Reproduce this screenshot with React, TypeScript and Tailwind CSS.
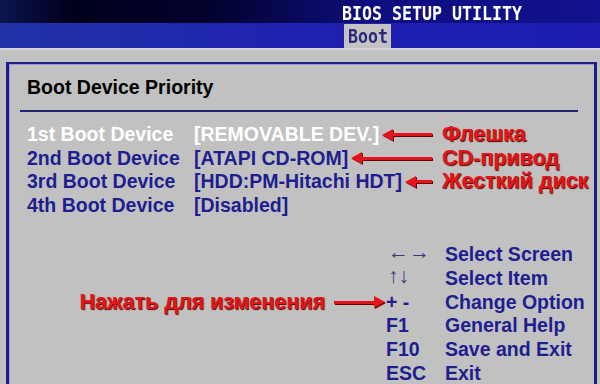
const mono = 'font-["DejaVu_Sans_Mono",monospace]';
const sans = 'font-["Liberation_Sans",Arial,sans-serif]';

function RedArrow({ dir, className }: { dir: 'left' | 'right'; className?: string }) {
  const head = (
    <svg width="11" height="12" viewBox="0 0 11 12" className="shrink-0">
      {dir === 'left' ? (
        <polygon points="0,6 11,0 11,12" fill="#e3141c" />
      ) : (
        <polygon points="11,6 0,0 0,12" fill="#e3141c" />
      )}
    </svg>
  );
  return (
    <div className={`flex items-center [filter:drop-shadow(1px_1px_0_#6a0000)] ${className ?? ''}`}>
      {dir === 'left' && head}
      <div className="h-[3px] flex-1 bg-[#e3141c]" />
      {dir === 'right' && head}
    </div>
  );
}

function Note({ children }: { children: string }) {
  return (
    <span className={`${sans} whitespace-nowrap text-[21.5px] font-bold text-[#e3141c] [text-shadow:1px_1px_1px_#5a0000]`}>
      {children}
    </span>
  );
}

const devices = [
  { label: '1st Boot Device', value: '[REMOVABLE DEV.]', note: 'Флешка', active: true },
  { label: '2nd Boot Device', value: '[ATAPI CD-ROM]', note: 'CD-привод' },
  { label: '3rd Boot Device', value: '[HDD:PM-Hitachi HDT]', note: 'Жесткий диск' },
  { label: '4th Boot Device', value: '[Disabled]' },
];

const keys = [
  { key: '←→', desc: 'Select Screen', thin: true },
  { key: '↑↓', desc: 'Select Item', thin: true },
  { key: '+ -', desc: 'Change Option', note: 'Нажать для изменения' },
  { key: 'F1', desc: 'General Help' },
  { key: 'F10', desc: 'Save and Exit' },
  { key: 'ESC', desc: 'Exit' },
];

export default function App() {
  return (
    <div className="flex h-[384px] w-[600px] flex-col overflow-hidden bg-[#c1c1c1]">
      {/* title bar */}
      <div className="h-[23px] bg-[linear-gradient(90deg,#0c1450_0%,#00001c_12%,#02022e_35%,#0e0e80_62%,#12128e_100%)] pl-[342px] pt-[2px]">
        <span className={`${mono} inline-block origin-left scale-x-[0.874] text-[19px] font-bold leading-[21px] text-white`}>
          BIOS SETUP UTILITY
        </span>
      </div>

      {/* tab bar */}
      <div className="box-content h-[25px] border-b-2 border-[#d4d4dc] bg-[linear-gradient(90deg,#2232a6_0%,#1e22b0_50%,#1c1cb2_100%)] pl-[344px]">
        <div className="mt-px h-[24px] w-[47px] bg-[#c3c3c3] pl-[4px]">
          <span className={`${mono} inline-block origin-left scale-x-[0.874] text-[19px] font-bold leading-[24px] text-[#2a2a78]`}>
            Boot
          </span>
        </div>
      </div>

      {/* main panel */}
      <div className={`${sans} ml-[6px] mt-[12px] flex w-[591px] flex-1 flex-col border-x-[3px] border-t-[2px] border-[#1e1e88] shadow-[inset_1px_1px_0_#9a9ad8]`}>
        <div className="pl-[18px] pt-[11px] text-[19.5px] font-bold leading-[24px] text-black">
          Boot Device Priority
        </div>
        <div className="ml-[11px] mr-[16px] mt-[11px] h-[2px] bg-[#24246e]" />

        <div className="mt-[11px] flex flex-col pl-[18px] text-[19.5px] font-bold leading-[23.5px]">
          {devices.map((d) => (
            <div key={d.label} className={`flex items-center ${d.active ? 'text-white' : 'text-[#1e1e90]'}`}>
              <span className="w-[167px] shrink-0">{d.label}</span>
              <div className="flex w-[238px] shrink-0 items-center">
                <span className="whitespace-nowrap">{d.value}</span>
                {d.note && <RedArrow dir="left" className="ml-[3px] flex-1" />}
              </div>
              {d.note && (
                <span className="ml-[10px] leading-[23.5px]">
                  <Note>{d.note}</Note>
                </span>
              )}
            </div>
          ))}
        </div>

        <div className="mt-[26px] grid grid-cols-[376px_60px_1fr] text-[19.5px] font-bold leading-[23.8px] text-[#1e1e90]">
          {keys.map((k) => (
            <div key={k.desc} className="contents">
              <div className="flex items-center justify-end">
                {k.note && (
                  <>
                    <Note>{k.note}</Note>
                    <RedArrow dir="right" className="ml-[9px] w-[51px]" />
                  </>
                )}
              </div>
              <span
                className={
                  k.thin
                    ? '-translate-y-[3px] pl-[3px] text-[21px] font-normal text-[#3a3a80]'
                    : 'pl-[1px]'
                }
              >
                {k.key}
              </span>
              <span>{k.desc}</span>
            </div>
          ))}
        </div>
      </div>
    </div>
  );
}
